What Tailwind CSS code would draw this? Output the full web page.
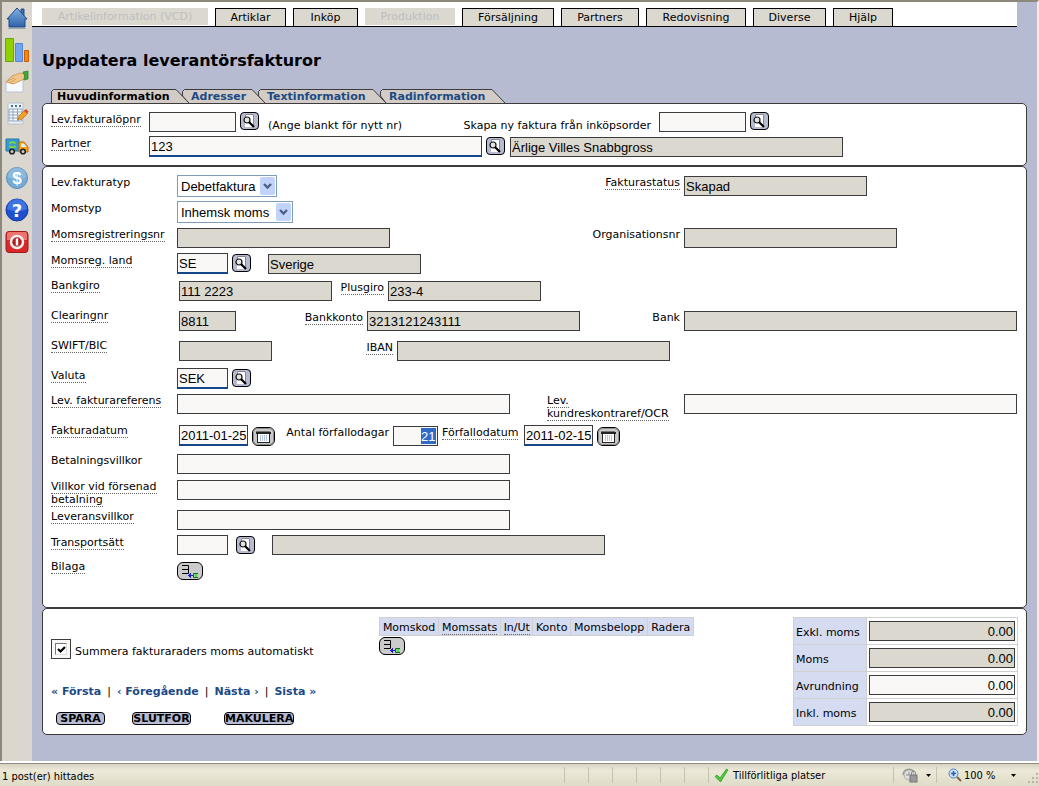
<!DOCTYPE html>
<html lang="sv">
<head>
<meta charset="utf-8">
<title>Uppdatera leverantörsfakturor</title>
<script src="https://cdn.jsdelivr.net/npm/@tailwindcss/browser@4"></script>
</head>
<body class="flex min-h-screen flex-col bg-[#b6bbd2] font-['DejaVu_Sans',Verdana,sans-serif] text-[11px] leading-[13px] text-black">

<svg class="hidden" aria-hidden="true">
  <symbol id="search" viewBox="0 0 19 18">
    <path d="M5 2h9v13H5z" fill="#fff"/>
    <path d="M5.500 5V2.500h8V14" fill="none" stroke="#85858c"/>
    <circle cx="7" cy="8" r="3" fill="#e4e4e4" stroke="#111" stroke-width="1.200"/>
    <path d="M9 10l5 5" stroke="#000" stroke-width="2.200"/>
  </symbol>
  <symbol id="calendar" viewBox="0 0 23 19">
    <rect x="1.500" y="1.500" width="20" height="16" rx="4" fill="none" stroke="#8d8d90"/>
    <rect x="5.500" y="5.500" width="12" height="10" fill="#fff" stroke="#222"/>
    <path d="M4 5h15v2H4z" fill="#222"/>
    <path d="M4.500 4.500h14" stroke="#222" stroke-dasharray="1 1"/>
    <path d="M8.500 8v6M10.500 8v6M12.500 8v6M14.500 8v6" stroke="#b5c2e0"/>
  </symbol>
  <symbol id="addrow" viewBox="0 0 26 18">
    <path d="M5 3.500h6.500v8H5M5 7.500h6.500" fill="none" stroke="#000"/>
    <path d="M11 13.500h5M13.500 11v5M12.500 12v3" stroke="#2020c0"/>
    <path d="M21 11.500h-4.500v4H21" fill="none" stroke="#0a6a20"/>
    <path d="M17.500 12h3v3h-3z" fill="#4ce04c"/>
  </symbol>
</svg>

<div class="flex flex-1 border-t-2 border-r-2 border-l-2 border-t-[#8c897c] border-r-[#f1efe2] border-l-[#8c897c]">
  <aside class="flex w-[30px] shrink-0 flex-col items-center gap-2 bg-[#dbd7ce] pt-1">
    <a href="#" aria-label="Hem"><svg class="size-6" viewBox="0 0 24 24"><defs><linearGradient id="h" x2="0" y2="1"><stop stop-color="#7fb0e4"/><stop offset="1" stop-color="#2f62a8"/></linearGradient></defs><path d="M16 3h3v7h-3z" fill="#3a6cae" stroke="#24508c"/><path d="M12 2L2 13h2v8h16v-8h2z" fill="url(#h)" stroke="#1f4a86"/><path d="M3 22.500h18" stroke="#9aa6b6"/></svg></a>
    <a href="#" aria-label="Statistik"><svg class="size-6" viewBox="0 0 24 24"><path d="M.5.500h8v23h-8z" fill="#8ed000" stroke="#69a800"/><path d="M10.500 5.500h7v18h-7z" fill="#72a5ee" stroke="#5585d0"/><path d="M19.500 12.500h4v11h-4z" fill="#f58410" stroke="#c85f00"/></svg></a>
    <a href="#" aria-label="Partners"><svg class="size-6" viewBox="0 0 24 24"><path d="M1 9h17v13H1z" fill="#f7fafd" stroke="#b8c4d0"/><path d="M1 12l6-6 8-3 5 1-1 5-6 3-5 2-3-1z" fill="#f2c58a" stroke="#c8904c" stroke-width=".8"/><path d="M18 2l5-1v8l-4 1q2-4-1-8z" fill="#3aae3a" stroke="#207c20" stroke-width=".7"/><path d="M3 11l6-3M5 13l6-4" stroke="#c8904c" stroke-width=".7"/></svg></a>
    <a href="#" aria-label="Redigera"><svg class="size-6" viewBox="0 0 24 24"><path d="M3 1h15v21H3z" fill="#eff2f6" stroke="#b9c0ca"/><path d="M4 7h13v12H4z" fill="#fff" stroke="#88a3c4"/><path d="M4 10h13M4 13h13M4 16h13M8 7v12M12.500 7v12" stroke="#88a3c4"/><path d="M6 4h10" stroke="#456f9e" stroke-width="2" stroke-dasharray="2 2"/><path d="M13 18l1-4 6-6 3 3-6 6z" fill="#f4a321" stroke="#b56e10" stroke-width=".7"/><path d="M19 9l2-2 2.500 2.500-2 2z" fill="#d84a30"/></svg></a>
    <a href="#" aria-label="Leverans"><svg class="size-6" viewBox="0 0 24 24"><path d="M1 5h13v12H1z" fill="#389bd0" stroke="#2276a8"/><path d="M14 8h5l4 5v5h-9z" fill="#f6a21c" stroke="#b87008"/><path d="M16 9.500h3l2.500 3.500H16z" fill="#d9effa"/><path d="M4.500 9.500a3.500 3 0 0 1 6 0M10.500 12a3.500 3 0 0 1-6 0" fill="none" stroke="#82dc3a" stroke-width="1.800"/><g fill="#ccc" stroke="#222" stroke-width="1.600"><circle cx="7" cy="17.500" r="2.300"/><circle cx="18" cy="17.500" r="2.300"/></g></svg></a>
    <a href="#" aria-label="Ekonomi"><svg class="size-6" viewBox="0 0 24 24"><circle cx="12" cy="12" r="10.500" fill="#77abd4" stroke="#5b8fbb"/><path d="M2.500 11a9.500 9.500 0 0 1 19 0c-6 3-13 3-19 0z" fill="#8cbade"/><text x="12" y="18" text-anchor="middle" font-family="Liberation Sans" font-size="17" font-weight="bold" fill="#fff">$</text></svg></a>
    <a href="#" aria-label="Hjälp"><svg class="size-6" viewBox="0 0 24 24"><circle cx="12" cy="12" r="11" fill="#1e4fcf" stroke="#173c9c"/><path d="M2 11a10 10 0 0 1 20 0c-6 3-14 3-20 0z" fill="#3f72e2"/><text x="12" y="18.500" text-anchor="middle" font-family="DejaVu Sans" font-size="18" font-weight="bold" fill="#fff">?</text></svg></a>
    <a href="#" aria-label="Logga ut"><svg class="size-6" viewBox="0 0 24 24"><rect x="1" y="1.500" width="22" height="21" rx="3" fill="#d8282c" stroke="#a01818"/><path d="M2 4q0-2 2-2h16q2 0 2 2v6H2z" fill="#ee7470"/><circle cx="12" cy="12" r="6" fill="#b01c1c" stroke="#ececec" stroke-width="2.500"/><path d="M12 8.500v7" stroke="#fff" stroke-width="2.500"/></svg></a>
  </aside>

  <main class="min-w-0 flex-1">
    <nav class="mr-5 flex h-[25px] items-end gap-[7px] border-b border-black bg-white pl-2.5">
      <button disabled class="mb-px h-[17px] w-[166px] bg-[#dbd8d0] text-[#bebebe]">Artikelinformation (VCD)</button>
      <button class="h-[18px] w-[71px] border border-b-0 border-black bg-[#dbd8d0]">Artiklar</button>
      <button class="h-[18px] w-[65px] border border-b-0 border-black bg-[#dbd8d0]">Inköp</button>
      <button disabled class="mb-px h-[17px] w-[90px] bg-[#dbd8d0] text-[#bebebe]">Produktion</button>
      <button class="h-[18px] w-[92px] border border-b-0 border-black bg-[#dbd8d0]">Försäljning</button>
      <button class="h-[18px] w-[78px] border border-b-0 border-black bg-[#dbd8d0]">Partners</button>
      <button class="h-[18px] w-[100px] border border-b-0 border-black bg-[#dbd8d0]">Redovisning</button>
      <button class="h-[18px] w-[73px] border border-b-0 border-black bg-[#dbd8d0]">Diverse</button>
      <button class="h-[18px] w-[60px] border border-b-0 border-black bg-[#dbd8d0]">Hjälp</button>
    </nav>

    <div class="pr-2.5 pb-[26px] pl-2.5">
      <h1 class="pt-[23px] text-[16px] leading-[22px] font-bold">Uppdatera leverantörsfakturor</h1>

      <div class="flex pt-[17px] pl-[9px] font-bold text-[#1b4a85]" role="tablist">
        <a href="#" role="tab" class="relative flex h-[14px] w-[131px] pt-px pl-1.5 text-black"><svg class="absolute inset-0 -z-10 h-[14px] w-[142px]" viewBox="0 0 142 14"><path d="M.5 14V2.500l2-2H125l13 13.500" fill="#d3ccc6" stroke="#3c3c3c"/></svg>Huvudinformation</a>
        <a href="#" role="tab" class="relative flex h-[14px] w-[76px] pt-px pl-[9px]"><svg class="absolute inset-0 -z-10 h-[14px] w-[90px]" viewBox="0 0 90 14"><path d="M7 14L.5 7V2.500l2-2H70l13 13.500" fill="#d3ccc6" stroke="#3c3c3c"/></svg>Adresser</a>
        <a href="#" role="tab" class="relative flex h-[14px] w-[122px] pt-px pl-[9px]"><svg class="absolute inset-0 -z-10 h-[14px] w-[130px]" viewBox="0 0 130 14"><path d="M7 14L.5 7V2.500l2-2H115l13 13.500" fill="#d3ccc6" stroke="#3c3c3c"/></svg>Textinformation</a>
        <a href="#" role="tab" class="relative flex h-[14px] w-[126px] pt-px pl-[9px]"><svg class="absolute inset-0 -z-10 h-[14px] w-[130px]" viewBox="0 0 130 14"><path d="M6 14L.5 7V2.500l2-2H112l13 13.500" fill="#d3ccc6" stroke="#3c3c3c"/></svg>Radinformation</a>
      </div>

      <form>
      <section class="h-[63px] rounded-[5px] border border-[#3c3c3c] bg-white pt-2 pl-2">
        <div class="flex h-[25px] items-start">
          <div class="w-[98px] pt-px"><label for="lopnr" class="border-b border-dotted border-[#666]">Lev.fakturalöpnr</label></div>
          <input id="lopnr" class="h-5 w-[87px] border border-[#3c3c3c] bg-[#f9f8f7] px-0.5 font-['Liberation_Sans'] text-[13px]">
          <button type="button" aria-label="Sök" class="ml-1 h-[18px] w-[19px] rounded border border-black bg-[#b6bbd2]"><svg class="-m-px h-[18px] w-[19px]"><use href="#search"/></svg></button>
          <span class="w-[189px] pt-[7px] pl-[9px]">(Ange blankt för nytt nr)</span>
          <label for="order" class="w-[207px] pt-[7px] pr-1 text-right whitespace-nowrap">Skapa ny faktura från inköpsorder</label>
          <input id="order" class="ml-1 h-5 w-[87px] border border-[#3c3c3c] bg-[#f9f8f7] px-0.5 font-['Liberation_Sans'] text-[13px]">
          <button type="button" aria-label="Sök" class="ml-1 h-[18px] w-[19px] rounded border border-black bg-[#b6bbd2]"><svg class="-m-px h-[18px] w-[19px]"><use href="#search"/></svg></button>
        </div>
        <div class="flex items-start">
          <div class="w-[98px]"><label for="partner" class="border-b border-dotted border-[#666]">Partner</label></div>
          <input id="partner" value="123" class="-mt-px h-[21px] w-[333px] border border-b-2 border-[#3c3c3c] border-b-[#14488a] bg-[#f9f8f7] px-px font-['Liberation_Sans'] text-[13px]">
          <button type="button" aria-label="Sök" class="ml-1 h-[18px] w-[19px] rounded border border-black bg-[#b6bbd2]"><svg class="-m-px h-[18px] w-[19px]"><use href="#search"/></svg></button>
          <input aria-label="Partnernamn" readonly value="Ärlige Villes Snabbgross" class="ml-[5px] h-5 w-[333px] border border-[#3c3c3c] bg-[#dbd8d0] px-px font-['Liberation_Sans'] text-[13px]">
        </div>
      </section>

      <section class="h-[442px] rounded-[5px] border border-[#3c3c3c] bg-white pt-[7px] pr-[9px] pl-2">
        <div class="flex h-[26px] items-start">
          <label for="typ" class="w-[126px] pt-0.5">Lev.fakturatyp</label>
          <div class="relative flex-1 pt-px"><select id="typ" class="h-[22px] w-[100px] appearance-none border border-[#7f9db9] bg-white pl-[3px] font-['Liberation_Sans'] text-[13px]"><option>Debetfaktura</option></select><svg class="pointer-events-none absolute top-[3px] left-[83px] h-[18px] w-[15px]" viewBox="0 0 15 18"><rect width="15" height="18" rx="2" fill="#c1d3fb"/><path d="M4 7l3.500 3.500L11 7" fill="none" stroke="#4d6185" stroke-width="2.400"/></svg></div>
          <div class="w-[133px] pt-0.5 text-right"><label for="status" class="border-b border-dotted border-[#666]">Fakturastatus</label></div>
          <div class="w-[337px] pt-0.5 pl-1"><input id="status" readonly value="Skapad" class="h-5 w-[183px] border border-[#3c3c3c] bg-[#dbd8d0] px-px font-['Liberation_Sans'] text-[13px]"></div>
        </div>
        <div class="flex h-[26px] items-start">
          <label for="moms" class="w-[126px] pt-0.5">Momstyp</label>
          <div class="relative flex-1 pt-px"><select id="moms" class="h-[22px] w-[116px] appearance-none border border-[#7f9db9] bg-white pl-[3px] font-['Liberation_Sans'] text-[13px]"><option>Inhemsk moms</option></select><svg class="pointer-events-none absolute top-[3px] left-[99px] h-[18px] w-[15px]" viewBox="0 0 15 18"><rect width="15" height="18" rx="2" fill="#c1d3fb"/><path d="M4 7l3.500 3.500L11 7" fill="none" stroke="#4d6185" stroke-width="2.400"/></svg></div>
        </div>
        <div class="flex h-[26px] items-start pt-0.5">
          <div class="w-[126px]"><label for="regnr" class="border-b border-dotted border-[#666]">Momsregistreringsnr</label></div>
          <div class="flex flex-1"><input id="regnr" readonly class="h-5 w-[213px] border border-[#3c3c3c] bg-[#dbd8d0]"></div>
          <label for="orgnr" class="w-[133px] text-right">Organisationsnr</label>
          <div class="flex w-[337px] pl-1"><input id="orgnr" readonly class="h-5 w-[213px] border border-[#3c3c3c] bg-[#dbd8d0]"></div>
        </div>
        <div class="flex h-[25px] items-start pt-px">
          <div class="w-[126px] pt-px"><label for="land" class="border-b border-dotted border-[#666]">Momsreg. land</label></div>
          <input id="land" value="SE" class="h-[21px] w-[51px] border border-b-2 border-[#3c3c3c] border-b-[#14488a] bg-[#f9f8f7] px-px font-['Liberation_Sans'] text-[13px]">
          <button type="button" aria-label="Sök" class="mt-px ml-1 h-[18px] w-[19px] rounded border border-black bg-[#b6bbd2]"><svg class="-m-px h-[18px] w-[19px]"><use href="#search"/></svg></button>
          <input aria-label="Land" readonly value="Sverige" class="mt-px ml-[17px] h-5 w-[153px] border border-[#3c3c3c] bg-[#dbd8d0] px-px font-['Liberation_Sans'] text-[13px]">
        </div>
        <div class="flex h-[30px] items-start pt-0.5">
          <div class="w-[128px]"><label for="bg" class="border-b border-dotted border-[#666]">Bankgiro</label></div>
          <input id="bg" readonly value="111 2223" class="mt-0.5 h-5 w-[153px] border border-[#3c3c3c] bg-[#dbd8d0] px-px font-['Liberation_Sans'] text-[13px]">
          <div class="mt-0.5 w-[52px] text-right"><label for="pg" class="border-b border-dotted border-[#666]">Plusgiro</label></div>
          <input id="pg" readonly value="233-4" class="mt-0.5 ml-1 h-5 w-[153px] border border-[#3c3c3c] bg-[#dbd8d0] px-px font-['Liberation_Sans'] text-[13px]">
        </div>
        <div class="flex h-[30px] items-start pt-0.5">
          <div class="w-[128px]"><label for="clr" class="border-b border-dotted border-[#666]">Clearingnr</label></div>
          <input id="clr" readonly value="8811" class="mt-0.5 h-5 w-[57px] border border-[#3c3c3c] bg-[#dbd8d0] px-px font-['Liberation_Sans'] text-[13px]">
          <div class="mt-0.5 w-[127px] text-right"><label for="konto" class="border-b border-dotted border-[#666]">Bankkonto</label></div>
          <input id="konto" readonly value="3213121243111" class="mt-0.5 ml-1 h-5 w-[213px] border border-[#3c3c3c] bg-[#dbd8d0] px-px font-['Liberation_Sans'] text-[13px]">
          <label for="bank" class="mt-0.5 flex-1 text-right">Bank</label>
          <div class="mt-0.5 flex w-[337px] pl-1"><input id="bank" readonly class="h-5 w-[333px] border border-[#3c3c3c] bg-[#dbd8d0]"></div>
        </div>
        <div class="flex h-[30px] items-start pt-0.5">
          <div class="w-[128px]"><label for="bic" class="border-b border-dotted border-[#666]">SWIFT/BIC</label></div>
          <input id="bic" readonly class="mt-0.5 h-5 w-[93px] border border-[#3c3c3c] bg-[#dbd8d0]">
          <div class="mt-0.5 w-[121px] text-right"><label for="iban" class="border-b border-dotted border-[#666]">IBAN</label></div>
          <input id="iban" readonly class="mt-0.5 ml-1 h-5 w-[273px] border border-[#3c3c3c] bg-[#dbd8d0]">
        </div>
        <div class="flex h-[25px] items-start pt-px">
          <div class="w-[126px] pt-px"><label for="valuta" class="border-b border-dotted border-[#666]">Valuta</label></div>
          <input id="valuta" value="SEK" class="h-[21px] w-[51px] border border-b-2 border-[#3c3c3c] border-b-[#14488a] bg-[#f9f8f7] px-px font-['Liberation_Sans'] text-[13px]">
          <button type="button" aria-label="Sök" class="mt-px ml-1 h-[18px] w-[19px] rounded border border-black bg-[#b6bbd2]"><svg class="-m-px h-[18px] w-[19px]"><use href="#search"/></svg></button>
        </div>
        <div class="flex h-[30px] items-start pt-0.5">
          <div class="w-[126px]"><label for="ref" class="border-b border-dotted border-[#666]">Lev. fakturareferens</label></div>
          <div class="flex flex-1"><input id="ref" class="h-5 w-[333px] border border-[#3c3c3c] bg-[#f9f8f7]"></div>
          <div class="w-[133px]"><label for="ocr" class="border-b border-dotted border-[#666]">Lev. <br>kundreskontraref/OCR</label></div>
          <div class="flex w-[337px] pl-1"><input id="ocr" class="h-5 w-[333px] border border-[#3c3c3c] bg-[#f9f8f7]"></div>
        </div>
        <div class="flex h-[30px] items-start pt-0.5">
          <div class="w-[128px]"><label for="fdat" class="border-b border-dotted border-[#666]">Fakturadatum</label></div>
          <input id="fdat" value="2011-01-25" class="mt-px h-[21px] w-[69px] border border-b-2 border-[#3c3c3c] border-b-[#14488a] bg-[#f9f8f7] px-px font-['Liberation_Sans'] text-[13px]">
          <button type="button" aria-label="Kalender" class="mt-[3px] ml-1 h-[19px] w-[23px] rounded-md border border-black bg-[#c9c9cb]"><svg class="-m-px h-[19px] w-[23px]"><use href="#calendar"/></svg></button>
          <label for="dagar" class="mt-0.5 w-[114px] text-right whitespace-nowrap">Antal förfallodagar</label>
          <div class="mt-0.5 ml-1 h-5 w-[45px] border border-[#3c3c3c] bg-[#f9f8f7] px-px py-px"><input id="dagar" value="21" class="float-right block h-4 w-[15px] bg-[#316ac5] font-['Liberation_Sans'] text-[13px] text-white"></div>
          <div class="mt-0.5 w-[82px] pl-1 whitespace-nowrap"><label for="ffdat" class="border-b border-dotted border-[#666]">Förfallodatum</label></div>
          <input id="ffdat" value="2011-02-15" class="mt-px ml-1 h-[21px] w-[69px] border border-b-2 border-[#3c3c3c] border-b-[#14488a] bg-[#f9f8f7] px-px font-['Liberation_Sans'] text-[13px]">
          <button type="button" aria-label="Kalender" class="mt-[3px] ml-1 h-[19px] w-[23px] rounded-md border border-black bg-[#c9c9cb]"><svg class="-m-px h-[19px] w-[23px]"><use href="#calendar"/></svg></button>
        </div>
        <div class="flex h-[26px] items-start pt-0.5">
          <label for="villkor" class="w-[126px]">Betalningsvillkor</label>
          <input id="villkor" class="h-5 w-[333px] border border-[#3c3c3c] bg-[#f9f8f7]">
        </div>
        <div class="flex h-[30px] items-start pt-0.5">
          <div class="w-[126px]"><label for="sen" class="border-b border-dotted border-[#666]">Villkor vid försenad <br>betalning</label></div>
          <input id="sen" class="h-5 w-[333px] border border-[#3c3c3c] bg-[#f9f8f7]">
        </div>
        <div class="flex h-[26px] items-start pt-0.5">
          <div class="w-[126px]"><label for="lev" class="border-b border-dotted border-[#666]">Leveransvillkor</label></div>
          <input id="lev" class="h-5 w-[333px] border border-[#3c3c3c] bg-[#f9f8f7]">
        </div>
        <div class="flex h-[24px] items-start pt-px">
          <div class="w-[126px] pt-px"><label for="trp" class="border-b border-dotted border-[#666]">Transportsätt</label></div>
          <input id="trp" class="h-5 w-[51px] border border-[#3c3c3c] bg-[#f9f8f7]">
          <button type="button" aria-label="Sök" class="mt-px ml-2 h-[18px] w-[19px] rounded border border-black bg-[#b6bbd2]"><svg class="-m-px h-[18px] w-[19px]"><use href="#search"/></svg></button>
          <input aria-label="Transportsätt, namn" readonly class="ml-[17px] h-5 w-[333px] border border-[#3c3c3c] bg-[#dbd8d0]">
        </div>
        <div class="flex items-start pt-0.5">
          <div class="w-[126px]"><span class="border-b border-dotted border-[#666]">Bilaga</span></div>
          <button type="button" aria-label="Lägg till bilaga" class="mt-0.5 h-[18px] w-[26px] rounded-md border border-black bg-[#cbcbcd]"><svg class="-m-px h-[18px] w-[26px]"><use href="#addrow"/></svg></button>
        </div>
      </section>

      <section class="flex h-[127px] items-start rounded-[5px] border border-[#3c3c3c] bg-white pt-2 pr-2 pl-2">
        <div class="w-[328px] pt-[22px]">
          <div class="flex items-center gap-1">
            <span class="flex size-5 items-center justify-center border border-[#3c3c3c] bg-[#f9f8f7]"><input id="sum" type="checkbox" checked class="peer size-3 appearance-none border border-t-[#777] border-r-[#ddd] border-b-[#ddd] border-l-[#777] bg-white"><svg class="pointer-events-none absolute hidden size-[9px] peer-checked:block" viewBox="0 0 9 9"><path d="M1 4l2.500 2.500L8 2" fill="none" stroke="#000" stroke-width="2.200"/></svg></span>
            <label for="sum" class="pt-1 whitespace-nowrap">Summera fakturaraders moms automatiskt</label>
          </div>
          <div class="flex gap-1.5 pt-[26px] whitespace-nowrap">
            <a href="#" class="font-bold text-[#1b4a85]">« Första</a>|<a href="#" class="font-bold text-[#1b4a85]">‹ Föregående</a>|<a href="#" class="font-bold text-[#1b4a85]">Nästa ›</a>|<a href="#" class="font-bold text-[#1b4a85]">Sista »</a>
          </div>
          <div class="flex pt-[14px] pl-[5px] text-[11px] leading-[11px] font-bold">
            <button type="button" class="h-[13px] w-[49px] rounded border border-black bg-[#b6bbd2]">SPARA</button>
            <button type="button" class="ml-[27px] h-[13px] w-[59px] rounded border border-black bg-[#b6bbd2]">SLUTFÖR</button>
            <button type="button" class="ml-[33px] h-[13px] w-[70px] rounded border border-black bg-[#b6bbd2]">MAKULERA</button>
          </div>
        </div>
        <div class="flex-1">
          <table class="w-[315px] border-collapse bg-[#d5dbf0] whitespace-nowrap">
            <thead><tr>
              <th class="h-[18px] border border-[#d0d0d0] px-0.5 pt-px font-normal">Momskod</th>
              <th class="border border-[#d0d0d0] px-0.5 pt-px font-normal"><span class="border-b border-dotted border-[#666]">Momssats</span></th>
              <th class="border border-[#d0d0d0] px-0.5 pt-px font-normal"><span class="border-b border-dotted border-[#666]">In/Ut</span></th>
              <th class="border border-[#d0d0d0] px-0.5 pt-px font-normal">Konto</th>
              <th class="border border-[#d0d0d0] px-0.5 pt-px font-normal">Momsbelopp</th>
              <th class="border border-[#d0d0d0] px-0.5 pt-px font-normal">Radera</th>
            </tr></thead>
          </table>
          <button type="button" aria-label="Lägg till momsrad" class="mt-px block h-[18px] w-[26px] rounded-md border border-black bg-[#cbcbcd]"><svg class="-m-px h-[18px] w-[26px]"><use href="#addrow"/></svg></button>
        </div>
        <table class="w-[225px] border-collapse whitespace-nowrap">
          <tbody>
          <tr class="h-[27px]"><th class="w-[73px] border border-[#d0d0d0] bg-[#d5dbf0] px-0.5 pt-0.5 text-left font-normal"><label for="exkl">Exkl. moms</label></th><td class="border border-[#d0d0d0] px-0.5"><input id="exkl" readonly value="0.00" class="block h-5 w-full border border-[#3c3c3c] bg-[#dbd8d0] px-px text-right font-['Liberation_Sans'] text-[13px]"></td></tr>
          <tr class="h-[27px]"><th class="border border-[#d0d0d0] bg-[#d5dbf0] px-0.5 pt-0.5 text-left font-normal"><label for="ms">Moms</label></th><td class="border border-[#d0d0d0] px-0.5"><input id="ms" readonly value="0.00" class="block h-5 w-full border border-[#3c3c3c] bg-[#dbd8d0] px-px text-right font-['Liberation_Sans'] text-[13px]"></td></tr>
          <tr class="h-[27px]"><th class="border border-[#d0d0d0] bg-[#d5dbf0] px-0.5 pt-0.5 text-left font-normal"><label for="avr">Avrundning</label></th><td class="border border-[#d0d0d0] px-0.5"><input id="avr" value="0.00" class="block h-5 w-full border border-[#3c3c3c] bg-[#f9f8f7] px-px text-right font-['Liberation_Sans'] text-[13px]"></td></tr>
          <tr class="h-[27px]"><th class="border border-[#d0d0d0] bg-[#d5dbf0] px-0.5 pt-0.5 text-left font-normal"><label for="inkl">Inkl. moms</label></th><td class="border border-[#d0d0d0] px-0.5"><input id="inkl" readonly value="0.00" class="block h-5 w-full border border-[#3c3c3c] bg-[#dbd8d0] px-px text-right font-['Liberation_Sans'] text-[13px]"></td></tr>
          </tbody>
        </table>
      </section>
      </form>
    </div>
  </main>
</div>

<footer class="flex h-[25px] shrink-0 items-stretch border-t-2 border-white bg-[#ece9d8] font-['DejaVu_Sans_Condensed','DejaVu_Sans'] text-[11px]">
  <div class="flex flex-1 items-center border-t border-[#8e8c80] bg-linear-to-b from-[#d6d3c2] via-[#ece9d8] via-30% to-[#dedbc8]">
    <span class="flex-1 pt-0.5 pl-0.5">1 post(er) hittades</span>
    <span class="h-4 w-6 border-l border-[#c5c2b0]"></span><span class="h-4 w-6 border-l border-[#c5c2b0]"></span><span class="h-4 w-6 border-l border-[#c5c2b0]"></span><span class="h-4 w-6 border-l border-[#c5c2b0]"></span><span class="h-4 w-6 border-l border-[#c5c2b0]"></span><span class="h-4 w-6 border-l border-[#c5c2b0]"></span>
    <span class="flex h-4 w-[185px] items-center gap-1 border-l border-[#c5c2b0] pl-[5px]"><svg class="size-[15px]" viewBox="0 0 15 15"><path d="M1 8.500l2-1.500 3 3L12.500 1 14 2 6.500 14z" fill="#4cc83c" stroke="#2c9a22" stroke-width=".7"/></svg>Tillförlitliga platser</span>
    <span class="flex h-4 w-[43px] items-center gap-2 border-l border-[#c5c2b0] pl-2"><svg class="size-4" viewBox="0 0 16 16"><path d="M1 8a6 6 0 0 1 11-3" fill="none" stroke="#999" stroke-width="1.500"/><circle cx="7" cy="8" r="5" fill="#e0e0e0" stroke="#aaa"/><path d="M7 5v3H4" stroke="#888" fill="none"/><rect x="8" y="8" width="7" height="7" fill="#999" stroke="#777"/><path d="M9.500 8V6a2 2 0 0 1 4 0v2" fill="none" stroke="#888"/></svg><svg class="h-[3px] w-[5px]" viewBox="0 0 5 3"><path d="M0 0h5L2.500 3z"/></svg></span>
    <button class="flex h-4 w-[103px] items-center border-l border-[#c5c2b0] pl-[11px]"><svg class="mr-0.5 size-3.5" viewBox="0 0 14 14"><circle cx="5.500" cy="5.500" r="4.500" fill="#cfe4fa" stroke="#4c82c0"/><path d="M3 5.500h5M5.500 3v5" stroke="#1b5fc0" stroke-width="1.500"/><path d="M9 9l4 4" stroke="#806040" stroke-width="2"/></svg>100 %<svg class="ml-4 h-[3px] w-[5px]" viewBox="0 0 5 3"><path d="M0 0h5L2.500 3z"/></svg><svg class="mt-1.5 ml-auto size-3" viewBox="0 0 12 12"><path d="M9 1h2v2H9zM5 5h2v2H5zM9 5h2v2H9zM1 9h2v2H1zM5 9h2v2H5zM9 9h2v2H9z" fill="#b8b4a2"/></svg></button>
  </div>
</footer>
</body>
</html>
